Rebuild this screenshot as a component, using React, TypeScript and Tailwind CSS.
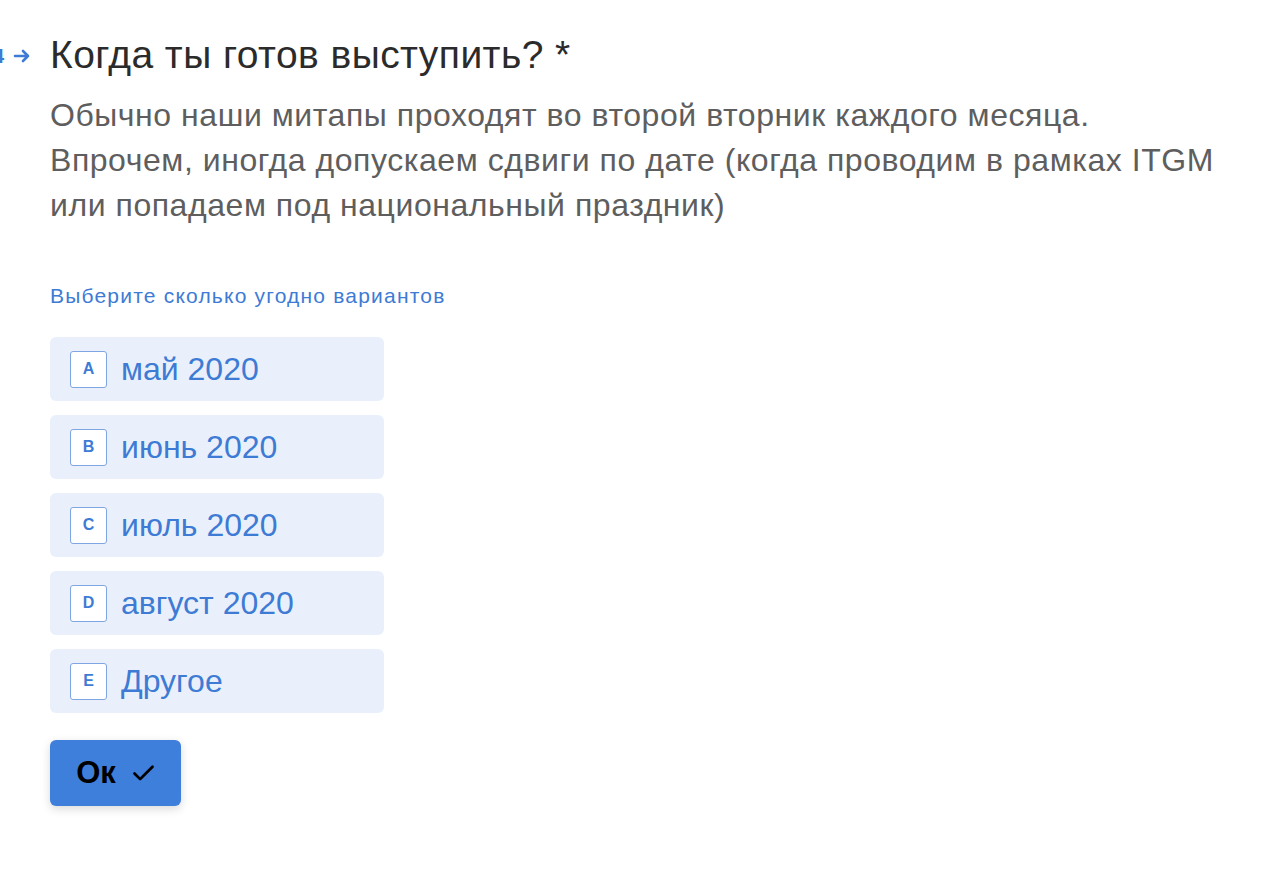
import { Check } from 'lucide-react';

const options = [
  { key: 'A', label: 'май 2020' },
  { key: 'B', label: 'июнь 2020' },
  { key: 'C', label: 'июль 2020' },
  { key: 'D', label: 'август 2020' },
  { key: 'E', label: 'Другое' },
];

export default function App() {
  return (
    <div className="min-h-[887px] bg-white font-['Liberation_Sans',Arial,sans-serif] overflow-hidden">
      <div className="pl-[50px] pt-[31px] pr-[40px]">
        {/* Question title */}
        <div className="relative">
          <div className="absolute left-[-57px] top-[15px] flex items-center gap-[9px] text-[#3d7bd5]">
            <span className="text-[20px] font-bold leading-none">4</span>
            <svg width="18" height="14" viewBox="0 0 18 14" fill="none" stroke="currentColor" strokeWidth="2.6" strokeLinecap="round" strokeLinejoin="round">
              <path d="M2 7h13M10 2l5 5-5 5" />
            </svg>
          </div>
          <h1 className="text-[39px] leading-[48px] tracking-[0.45px] text-[#2b2b2b] font-normal">
            Когда ты готов выступить? *
          </h1>
        </div>

        {/* Description */}
        <p className="mt-[14px] text-[32px] leading-[45px] tracking-[0.55px] text-[#5e5e5e] max-w-[1190px]">
          Обычно наши митапы проходят во второй вторник каждого месяца.
          <br />
          Впрочем, иногда допускаем сдвиги по дате (когда проводим в рамках ITGM
          или попадаем под национальный праздник)
        </p>

        {/* Hint */}
        <div className="mt-[55px] text-[21px] leading-[26px] tracking-[1.2px] text-[#3d7bd5]">
          Выберите сколько угодно вариантов
        </div>

        {/* Options */}
        <div className="mt-[28px] flex flex-col gap-[14px] w-[334px]">
          {options.map((o) => (
            <div
              key={o.key}
              className="h-[64px] rounded-[6px] bg-[#e9f0fb] flex items-center pl-[20px] gap-[14px]"
            >
              <div className="w-[37px] h-[37px] rounded-[3px] border border-[#7fa6e3] bg-white flex items-center justify-center text-[16px] font-bold text-[#3d7bd5]">
                {o.key}
              </div>
              <span className="text-[32px] text-[#3d7bd5]">{o.label}</span>
            </div>
          ))}
        </div>

        {/* Submit */}
        <button className="mt-[27px] w-[131px] h-[66px] rounded-[6px] bg-[#3e7fdb] shadow-[0_3px_10px_rgba(0,0,0,0.15)] flex items-center justify-center gap-[14px] pl-[2px] text-black">
          <span className="text-[31px] font-bold">Ок</span>
          <Check size={27} strokeWidth={2.5} />
        </button>
      </div>
    </div>
  );
}
